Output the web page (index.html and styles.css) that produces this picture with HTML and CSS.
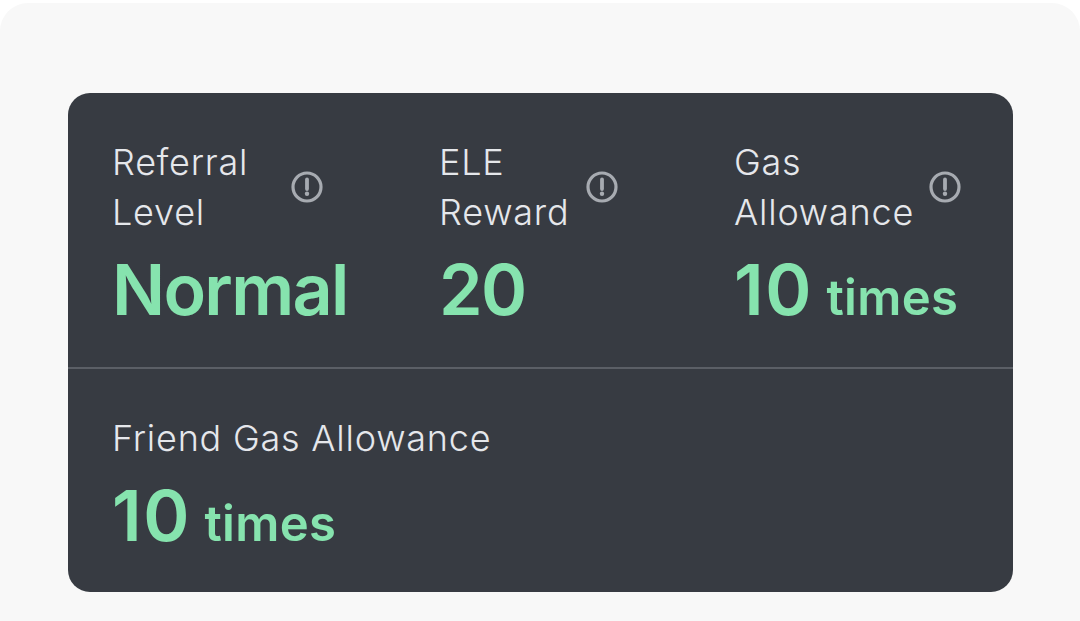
FILE: index.html
```html
<html>
  <head>
    <link rel="stylesheet" href="styles.css">
    <title>Referral</title>
  </head>
  <body>
    <div class="panel">
      <div class="card">
        <div class="row">
          <div class="stat stat-level">
            <div class="head">
              <span class="label">Referral<br>Level</span>
              <svg class="info" viewBox="0 0 32 32"><circle cx="16" cy="16" r="14" /><path d="M16 8.5v9.5" /><circle class="dot" cx="16" cy="22.8" r="2.2" /></svg>
            </div>
            <div class="value tight">Normal</div>
          </div>
          <div class="stat stat-reward">
            <div class="head">
              <span class="label">ELE<br>Reward</span>
              <svg class="info" viewBox="0 0 32 32"><circle cx="16" cy="16" r="14" /><path d="M16 8.5v9.5" /><circle class="dot" cx="16" cy="22.8" r="2.2" /></svg>
            </div>
            <div class="value tight">20</div>
          </div>
          <div class="stat stat-gas">
            <div class="head">
              <span class="label">Gas<br>Allowance</span>
              <svg class="info" viewBox="0 0 32 32"><circle cx="16" cy="16" r="14" /><path d="M16 8.5v9.5" /><circle class="dot" cx="16" cy="22.8" r="2.2" /></svg>
            </div>
            <div class="value"><span class="count">10</span><span class="unit">times</span></div>
          </div>
        </div>
        <div class="row row-friend">
          <div class="stat">
            <div class="head">
              <span class="label">Friend Gas Allowance</span>
            </div>
            <div class="value"><span class="count">10</span><span class="unit">times</span></div>
          </div>
        </div>
      </div>
    </div>
  </body>
</html>
```

FILE: styles.css
```css
html, body {
  margin: 0;
  height: 100%;
  background-color: #fff;
  overflow: hidden;
}

body {
  font-family: Inter, "Liberation Sans", sans-serif;
  padding-top: 3px;
  box-sizing: border-box;
}

.panel {
  height: 618px;
  box-sizing: border-box;
  padding: 90px 67px 0 68px;
  background-color: #f8f8f8;
  border-radius: 28px 28px 0 0;
}

.card {
  height: 499px;
  background-color: #373b42;
  border-radius: 22px;
}

.row {
  display: flex;
  gap: 117px;
  height: 276px;
  box-sizing: border-box;
  padding: 44px 0 0 45px;
  border-bottom: 2px solid #5b5f66;
}

.row-friend {
  height: auto;
  padding-top: 44px;
  border-bottom: 0;
}

.stat-level {
  width: 210px;
}

.stat-reward {
  width: 178px;
}

.stat-gas {
  width: 226px;
}

.head {
  display: flex;
  justify-content: space-between;
  align-items: center;
}

.label {
  margin-left: -1px;
  font-size: 36px;
  font-weight: 340;
  letter-spacing: 0.78px;
  line-height: 50px;
  color: #e5e7eb;
  white-space: nowrap;
}

.info {
  width: 32px;
  height: 32px;
  flex-shrink: 0;
  fill: none;
  stroke: #a7abb1;
  stroke-width: 3.2;
}

.info path {
  stroke-width: 3.8;
  stroke-linecap: round;
}

.info .dot {
  fill: #a7abb1;
  stroke: none;
}

.value {
  margin-top: 13px;
  margin-left: -1px;
  font-size: 70px;
  line-height: 80px;
  font-weight: 600;
  color: #86e3ae;
  white-space: nowrap;
}

.tight {
  letter-spacing: -1.7px;
}

.count {
  letter-spacing: 1.6px;
}

.unit {
  margin-left: 13.5px;
  font-size: 49px;
  font-weight: 600;
  letter-spacing: 0.3px;
}
```
